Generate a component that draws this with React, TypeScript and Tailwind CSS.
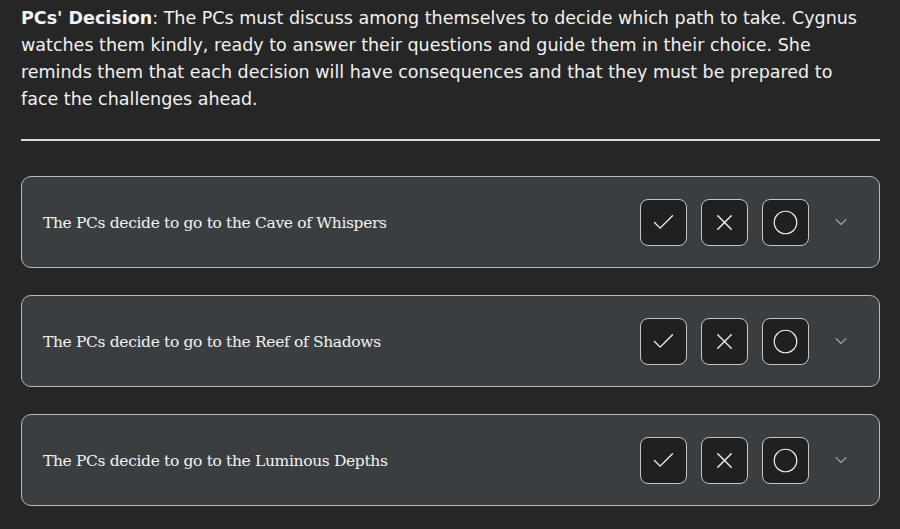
import { Check, X, Circle, ChevronDown } from "lucide-react";

const choices = [
  "The PCs decide to go to the Cave of Whispers",
  "The PCs decide to go to the Reef of Shadows",
  "The PCs decide to go to the Luminous Depths",
];

function ChoiceCard({ label }: { label: string }) {
  return (
    <div className="flex items-center h-[92px] pl-[21px] pr-[20px] rounded-[10px] border border-[#b8b8b8] bg-[#3a3e41]">
      <p className="flex-1 pt-[3px] text-[#f2f2f2] text-[15.5px] [font-family:'DejaVu_Serif',serif] tracking-[-0.35px]">
        {label}
      </p>
      <div className="flex items-center gap-[14px]">
        <button className="w-[47px] h-[47px] flex items-center justify-center rounded-[8px] border border-[#c4c4c4] bg-[#1e2022] text-[#f0f0f0]">
          <Check size={27} strokeWidth={1.2} />
        </button>
        <button className="w-[47px] h-[47px] flex items-center justify-center rounded-[8px] border border-[#c4c4c4] bg-[#1e2022] text-[#f0f0f0]">
          <X size={27} strokeWidth={1.2} />
        </button>
        <button className="w-[47px] h-[47px] flex items-center justify-center rounded-[8px] border border-[#c4c4c4] bg-[#1e2022] text-[#f0f0f0]">
          <Circle size={27} strokeWidth={1.1} />
        </button>
        <div className="w-[36px] flex justify-center text-[#9ea3a8]">
          <ChevronDown size={20} strokeWidth={1.3} />
        </div>
      </div>
    </div>
  );
}

export default function App() {
  return (
    <div className="min-h-[529px] bg-[#262626] pl-[21px] pr-[20px] pt-[5px] pb-[22px] [font-family:'DejaVu_Sans',sans-serif]">
      <p className="text-[#f2f2f2] text-[17.5px] leading-[27px]">
        <span className="font-bold">PCs' Decision</span>: The PCs must discuss among themselves to decide which path to take. Cygnus
        <br />
        watches them kindly, ready to answer their questions and guide them in their choice. She
        <br />
        reminds them that each decision will have consequences and that they must be prepared to
        <br />
        face the challenges ahead.
      </p>
      <div className="mt-[26px] border-t-2 border-[#d9d9d9]" />
      <div className="mt-[35px] flex flex-col gap-[27px]">
        {choices.map((c) => (
          <ChoiceCard key={c} label={c} />
        ))}
      </div>
    </div>
  );
}
